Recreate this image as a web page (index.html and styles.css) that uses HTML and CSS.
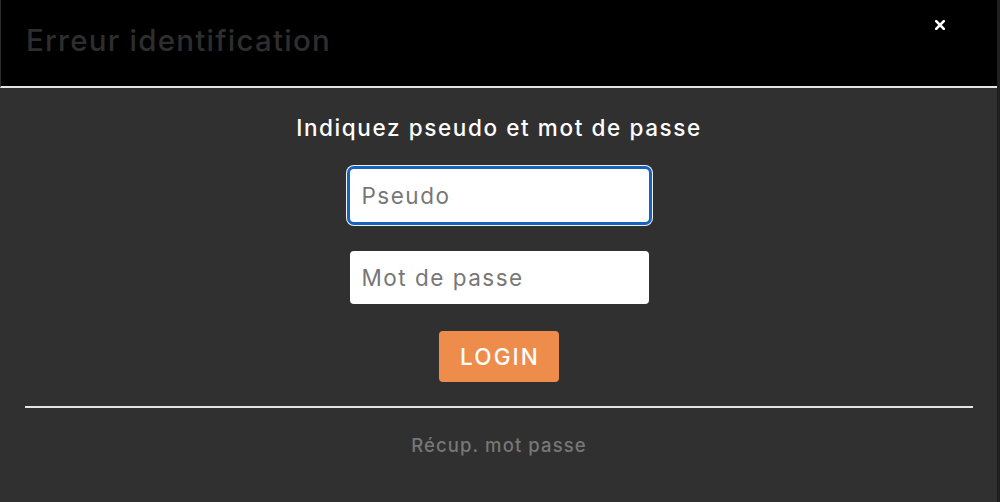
FILE: index.html
```html
<!DOCTYPE html>
<html lang="fr">
<head>
<meta charset="utf-8">
<title>Erreur identification</title>
<link rel="stylesheet" href="styles.css">
</head>
<body>
<div class="modal">
  <header class="modal-header">
    <h1 class="modal-title">Erreur identification</h1>
    <button class="close" type="button" aria-label="Fermer">
      <svg width="10" height="10" viewBox="0 0 10 10"><path d="M1.2 1.2 L8.8 8.8 M8.8 1.2 L1.2 8.8" stroke="#fff" stroke-width="2.6" stroke-linecap="square"/></svg>
    </button>
  </header>
  <div class="modal-body">
    <h2 class="prompt">Indiquez pseudo et mot de passe</h2>
    <form class="login-form">
      <input class="field is-focused" type="text" placeholder="Pseudo">
      <input class="field" type="password" placeholder="Mot de passe">
      <button class="btn-login" type="button">LOGIN</button>
    </form>
    <hr class="divider">
    <a class="recover" href="#">Récup. mot passe</a>
  </div>
</div>
</body>
</html>
```

FILE: styles.css
```css
html, body {
  margin: 0;
  padding: 0;
  height: 100%;
  background: #303030;
}
body {
  font-family: Inter, "Open Sans", "Liberation Sans", sans-serif;
}
.modal {
  height: 100%;
  display: flex;
  flex-direction: column;
  border-right: 3px solid #1f1f1f;
  box-sizing: border-box;
}
.modal-header {
  height: 86px;
  background: #000;
  border-bottom: 2px solid #e4e4e4;
  border-left: 1px solid #2c2c2c;
  display: flex;
  justify-content: space-between;
  align-items: flex-start;
  flex-shrink: 0;
}
.modal-title {
  margin: 0;
  padding: 22px 0 0 25px;
  font-size: 29.5px;
  line-height: 36px;
  font-weight: 500;
  color: #2e2e2e;
  letter-spacing: 1.25px;
}
.close {
  background: none;
  border: 0;
  padding: 0;
  width: 10px;
  height: 10px;
  margin: 20px 52px 0 0;
  display: flex;
}
.modal-body {
  flex: 1;
  padding: 26px 24px 0 25px;
  display: flex;
  flex-direction: column;
  align-items: center;
}
.prompt {
  margin: 0;
  font-size: 22.5px;
  line-height: 28px;
  font-weight: 500;
  color: #fff;
  letter-spacing: 1.6px;
}
.login-form {
  margin-top: 27px;
  display: flex;
  flex-direction: column;
  align-items: center;
}
.field {
  width: 299px;
  height: 53px;
  box-sizing: border-box;
  border: 0;
  border-radius: 4px;
  background: #fff;
  padding: 0 12px;
  font-family: inherit;
  font-size: 22.5px;
  letter-spacing: 1.5px;
  color: #333;
  outline: none;
}
.field::placeholder {
  color: #777;
}
.field + .field {
  margin-top: 29px;
}
.is-focused {
  box-shadow: 0 0 0 3px #1862c0, 0 0 0 4px #f2f2f2;
}
.btn-login {
  margin-top: 27px;
  width: 120px;
  height: 51px;
  border: 0;
  border-radius: 4px;
  background: #ee8d4b;
  color: #fff;
  font-family: inherit;
  font-size: 22.5px;
  font-weight: 500;
  letter-spacing: 2.1px;
  padding: 0 0 0 2px;
}
.divider {
  align-self: stretch;
  margin: 24px 0 0;
  border: 0;
  height: 2px;
  background: #e4e4e4;
}
.recover {
  margin-top: 26px;
  font-size: 18.5px;
  line-height: 22px;
  color: #777;
  text-decoration: none;
  font-weight: 500;
  letter-spacing: 1.1px;
}
```
